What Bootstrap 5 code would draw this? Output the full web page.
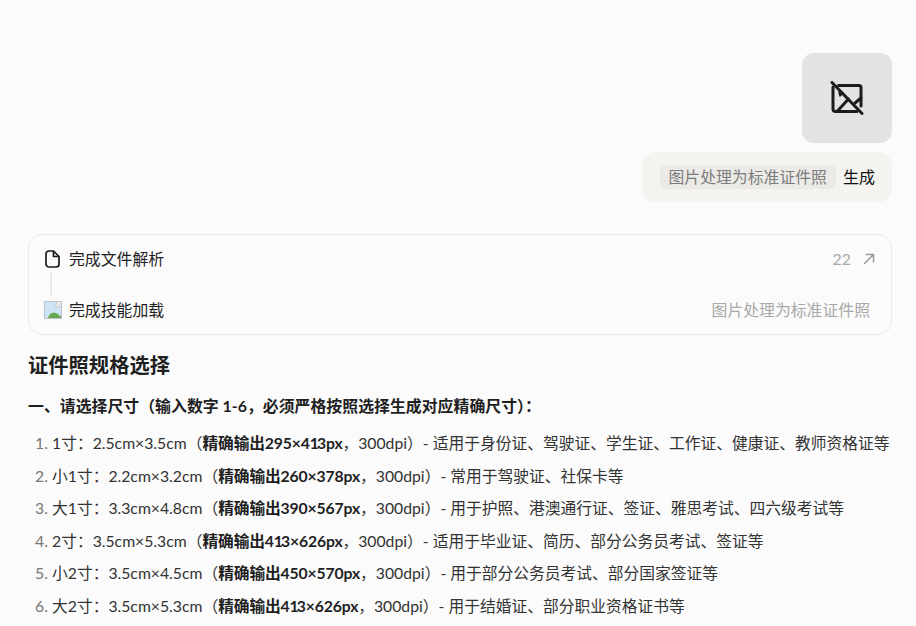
<!DOCTYPE html>
<html lang="zh">
<head>
<meta charset="utf-8">
<title>证件照</title>
<link href="https://cdn.jsdelivr.net/npm/bootstrap@5.3.0/dist/css/bootstrap.min.css" rel="stylesheet">
<style>
html,body{height:626px;overflow:hidden}
body{background:#fbfbfb;color:#1f1f1f;font-family:Lato,"Noto Sans CJK SC",sans-serif;font-size:16px}
.page-wrap{padding:53px 24px 0 28px}
.thumb-box{width:90px;height:90px;background:#e3e3e3;border-radius:12px}
.prompt-bubble{margin-top:9px;height:50px;background:#f4f3f0;border-radius:14px;padding:0 17px 0 18px;color:#111}
.skill-tag{background:#ebeae7;color:#7c7c7c;border-radius:6px;padding:0 8.500px;width:176px;font-size:15.850px;height:24px;line-height:24px;margin-right:7px;white-space:nowrap}
.steps-card{margin-top:32px;height:101px;border:1px solid #e8e8e8;border-radius:14px;padding:12px 21px 0 15px;font-size:15.850px}
.step-row{height:24px}
.step-icon{width:18px;flex:0 0 18px;margin-right:7px}
.step-line{width:2px;height:22px;background:#e9e9e9;margin:2px 0 0 6px}
.step-gap{height:27px;overflow:hidden}
.muted-text{color:#a8a8a8}
.open-arrow{margin:0 -5px 0 12px}
.doc-title{font-size:20.300px;font-weight:700;margin:15px 0 0;line-height:30px;color:#1f1f1f}
.doc-sub{font-size:15.900px;font-weight:700;margin:14px 0 0;line-height:24px}
.spec-list{margin:13px 0 0;padding:0 0 0 24px;color:#333;font-size:15.750px}
.spec-list li{height:32.500px;line-height:24px;white-space:nowrap}
.spec-list li::marker{color:#777}
.spec-list b{font-weight:700;color:#1f1f1f;letter-spacing:-.15px}
.spec-list b .narrow-one{letter-spacing:-2px}
</style>
</head>
<body>
<div class="page-wrap">
  <div class="d-flex flex-column align-items-end">
    <div class="thumb-box d-flex align-items-center justify-content-center">
      <svg width="34" height="34" viewBox="0 0 34 34" fill="none" stroke="#1c1c1c" stroke-width="3" stroke-linecap="round" stroke-linejoin="round"><path d="M3 6v22a2.500 2.500 0 0 0 2.500 2.500H27"/><path d="M8.500 4.500H29a2 2 0 0 1 2 2V25"/><path d="M2 1.500l30 31"/><path d="M7.500 30l11-12"/><path d="M31 17l-6 5"/><path d="M9 11l4 1-3 3z" fill="#1c1c1c" stroke-width="1.500"/></svg>
    </div>
    <div class="prompt-bubble d-flex align-items-center">
      <span class="skill-tag">图片处理为标准证件照</span><span>生成</span>
    </div>
  </div>

  <div class="steps-card">
    <div class="step-row d-flex align-items-center">
      <span class="step-icon d-flex">
        <svg width="16" height="18" viewBox="0 0 16 18" fill="none" stroke="#1c1c1c" stroke-width="1.700" stroke-linejoin="round"><path d="M4.500 1h5L15 6.500V14a3 3 0 0 1-3 3H5a3 3 0 0 1-3-3V4a3 3 0 0 1 2.500-3z"/><path d="M9.500 1v5.500H15"/></svg>
      </span>
      <span>完成文件解析</span>
      <span class="ms-auto muted-text">22</span>
      <svg class="open-arrow" width="12" height="12" viewBox="0 0 12 12" fill="none" stroke="#9a9a9a" stroke-width="1.500"><path d="M1 11L10.500 1.500M2.500 1.500h8v8"/></svg>
    </div>
    <div class="step-gap"><div class="step-line"></div></div>
    <div class="step-row d-flex align-items-center">
      <span class="step-icon d-flex">
        <svg width="18" height="18" viewBox="0 0 18 18"><rect x=".5" y=".5" width="17" height="17" fill="#e8f0f7" stroke="#bfc3c8"/><path d="M1 1h11l5 5v11H1z" fill="#cfe4f6"/><path d="M12 1l5 5h-5z" fill="#f3f3f3" stroke="#b5b5b5" stroke-width=".6"/><path d="M4 17c1-5 5-6 8-5s3 3 5 3v2z" fill="#69a84f"/></svg>
      </span>
      <span>完成技能加载</span>
      <span class="ms-auto muted-text">图片处理为标准证件照</span>
    </div>
  </div>

  <h1 class="doc-title">证件照规格选择</h1>
  <h2 class="doc-sub">一、请选择尺寸（输入数字 1-6，必须严格按照选择生成对应精确尺寸）：</h2>
  <ol class="spec-list">
    <li>1寸：2.5cm×3.5cm（<b>精确输出295×4<span class="narrow-one">1</span>3px</b>，300dpi）- 适用于身份证、驾驶证、学生证、工作证、健康证、教师资格证等</li>
    <li>小1寸：2.2cm×3.2cm（<b>精确输出260×378px</b>，300dpi）- 常用于驾驶证、社保卡等</li>
    <li>大1寸：3.3cm×4.8cm（<b>精确输出390×567px</b>，300dpi）- 用于护照、港澳通行证、签证、雅思考试、四六级考试等</li>
    <li>2寸：3.5cm×5.3cm（<b>精确输出4<span class="narrow-one">1</span>3×626px</b>，300dpi）- 适用于毕业证、简历、部分公务员考试、签证等</li>
    <li>小2寸：3.5cm×4.5cm（<b>精确输出450×570px</b>，300dpi）- 用于部分公务员考试、部分国家签证等</li>
    <li>大2寸：3.5cm×5.3cm（<b>精确输出4<span class="narrow-one">1</span>3×626px</b>，300dpi）- 用于结婚证、部分职业资格证书等</li>
  </ol>
</div>
<script src="https://cdn.jsdelivr.net/npm/bootstrap@5.3.0/dist/js/bootstrap.bundle.min.js"></script>
</body>
</html>
